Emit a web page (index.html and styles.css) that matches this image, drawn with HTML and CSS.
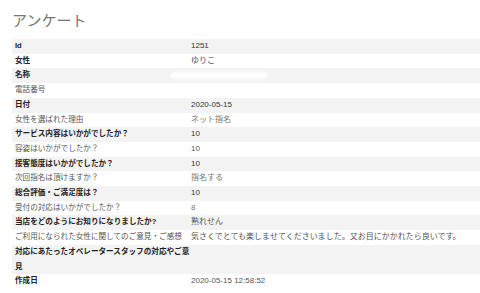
FILE: index.html
```html
<!DOCTYPE html>
<html lang="ja">
<head>
<meta charset="utf-8">
<title>アンケート</title>
<link rel="stylesheet" href="styles.css">
</head>
<body>
<div class="page">
  <h1 class="title">アンケート</h1>
  <table class="survey">
    <colgroup><col class="c-label"><col class="c-value"></colgroup>
    <tbody>
      <tr><th class="b">Id</th><td class="dark">1251</td></tr>
      <tr><th class="b">女性</th><td>ゆりこ</td></tr>
      <tr><th class="b">名称</th><td><span class="redact"></span></td></tr>
      <tr><th>電話番号</th><td></td></tr>
      <tr><th class="b">日付</th><td class="dark">2020-05-15</td></tr>
      <tr><th>女性を選ばれた理由</th><td class="light">ネット指名</td></tr>
      <tr><th class="b">サービス内容はいかがでしたか？</th><td class="dark">10</td></tr>
      <tr><th>容姿はいかがでしたか？</th><td>10</td></tr>
      <tr><th class="b">接客態度はいかがでしたか？</th><td class="dark">10</td></tr>
      <tr><th>次回指名は頂けますか？</th><td class="light">指名する</td></tr>
      <tr><th class="b">総合評価・ご満足度は？</th><td class="dark">10</td></tr>
      <tr><th>受付の対応はいかがでしたか？</th><td class="light">8</td></tr>
      <tr><th class="b">当店をどのようにお知りになりましたか?</th><td>熟れせん</td></tr>
      <tr><th>ご利用になられた女性に関してのご意見・ご感想</th><td>気さくでとても楽しませてくださいました。又お目にかかれたら良いです。</td></tr>
      <tr><th class="b">対応にあたったオペレータースタッフの対応やご意見</th><td></td></tr>
      <tr><th class="b">作成日</th><td>2020-05-15 12:58:52</td></tr>
    </tbody>
  </table>
</div>
</body>
</html>
```

FILE: styles.css
```css
html, body {
  margin: 0;
  padding: 0;
  background: #ffffff;
}

.page {
  padding: 0 0 0 12px;
  font-family: "Liberation Sans", "Noto Sans CJK JP", sans-serif;
}

.title {
  margin: 0;
  padding-top: 10px;
  font-size: 15px;
  line-height: 20px;
  font-weight: normal;
  color: #777777;
  font-family: "Noto Sans CJK JP", sans-serif;
}

.survey {
  margin-top: 9px;
  width: 100%;
  border-collapse: collapse;
  table-layout: fixed;
  line-height: 14.7px;
}

.c-label {
  width: 179px;
}

.survey th,
.survey td {
  padding: 0;
  vertical-align: top;
  text-align: left;
}

.survey th {
  padding-left: 3px;
  font-size: 7.6px;
  font-weight: normal;
  color: #555555;
  line-break: anywhere;
}

.survey th.b {
  font-weight: bold;
  color: #222222;
}

.survey td {
  font-size: 8px;
  color: #555555;
  white-space: nowrap;
}

.survey td.dark {
  color: #333333;
}

.survey td.light {
  color: #777777;
}

.survey tbody tr:nth-child(odd) {
  background: #f3f3f3;
}

.redact {
  display: inline-block;
  vertical-align: middle;
  width: 96px;
  height: 7px;
  margin-left: -20px;
  border-radius: 4px;
  background: #ffffff;
  filter: blur(1.2px);
}
```
